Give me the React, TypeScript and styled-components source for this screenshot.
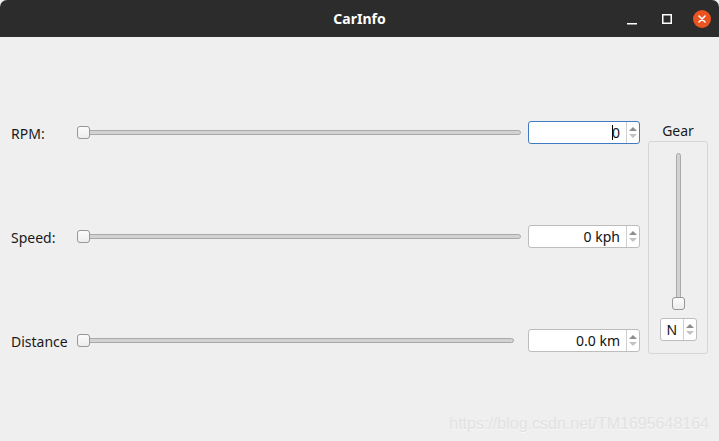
import React from "react";
import styled, { createGlobalStyle } from "styled-components";

const Global = createGlobalStyle`
  html, body { margin: 0; padding: 0; background: #2c2c2c; }
  body { font-family: "Noto Sans", "DejaVu Sans", sans-serif; }
`;

const Window = styled.div`
  width: 719px;
  height: 441px;
  display: flex;
  flex-direction: column;
  background: #efefef;
  position: relative;
  overflow: hidden;
`;

const TitleBar = styled.div`
  height: 37px;
  flex: none;
  background: #2c2c2c;
  border-radius: 7px 7px 0 0;
  display: flex;
  align-items: center;
  justify-content: center;
  position: relative;
  color: #ffffff;
  font-weight: 700;
  font-size: 14px;
`;

const Controls = styled.div`
  position: absolute;
  right: 8px;
  top: 0;
  height: 37px;
  display: flex;
  align-items: center;
  gap: 17px;
`;

const CtrlButton = styled.div<{ $close?: boolean }>`
  width: 18px;
  height: 18px;
  border-radius: 50%;
  display: flex;
  align-items: center;
  justify-content: center;
  background: ${(p) => (p.$close ? "#e95420" : "transparent")};
`;

const Body = styled.div`
  flex: 1;
  display: flex;
  padding: 84px 11px 0 11px;
  gap: 8px;
`;

const Rows = styled.div`
  display: flex;
  flex-direction: column;
  gap: 81px;
  width: 629px;
`;

const Row = styled.div`
  display: grid;
  grid-template-columns: 59px 1fr 112px;
  align-items: center;
  height: 23px;
  column-gap: 7px;
`;

const Label = styled.div`
  font-size: 14px;
  color: #1a1a1a;
  padding-top: 1px;
  white-space: nowrap;
`;

const HTrack = styled.div<{ $trim?: number }>`
  position: relative;
  height: 13px;
  margin-right: ${(p) => p.$trim ?? 0}px;
  display: flex;
  align-items: center;
`;

const HGroove = styled.div`
  flex: 1;
  height: 3px;
  background: #d2d2d2;
  border: 1px solid #a9a9a9;
  border-radius: 3px;
`;

const Handle = styled.div`
  position: absolute;
  width: 11px;
  height: 11px;
  background: linear-gradient(#fbfbfb, #ededed);
  border: 1px solid #979797;
  border-radius: 3px;
`;

const HHandle = styled(Handle)`
  left: 0;
  top: 0;
`;

const SpinBox = styled.div<{ $focus?: boolean; $w?: number }>`
  height: 21px;
  width: ${(p) => (p.$w ? `${p.$w}px` : "auto")};
  border: 1px solid ${(p) => (p.$focus ? "#3f7ac2" : "#bdbdbd")};
  border-radius: 3px;
  background: #ffffff;
  display: flex;
  box-sizing: content-box;
`;

const SpinText = styled.div<{ $left?: boolean }>`
  flex: 1;
  display: flex;
  align-items: center;
  justify-content: ${(p) => (p.$left ? "flex-start" : "flex-end")};
  padding: 0 6px;
  font-size: 14px;
  color: #111;
`;

const Caret = styled.span`
  display: inline-block;
  width: 1px;
  height: 15px;
  background: #000;
  margin-right: -1px;
`;

const Arrows = styled.div`
  width: 12px;
  border-left: 1px solid #d0d0d0;
  display: flex;
  flex-direction: column;
  align-items: center;
  justify-content: center;
  gap: 3px;
`;

const Up = styled.div`
  width: 0;
  height: 0;
  border-left: 4px solid transparent;
  border-right: 4px solid transparent;
  border-bottom: 4px solid #8d8d8d;
`;

const Down = styled.div`
  width: 0;
  height: 0;
  border-left: 4px solid transparent;
  border-right: 4px solid transparent;
  border-top: 4px solid #c2c2c2;
`;

const GearCol = styled.div`
  display: flex;
  flex-direction: column;
  align-items: center;
  margin-top: 1px;
  width: 60px;
`;

const GearLabel = styled.div`
  font-size: 14px;
  color: #1a1a1a;
  height: 17px;
  line-height: 17px;
  margin-bottom: 2px;
`;

const GroupBox = styled.div`
  width: 58px;
  height: 200px;
  border: 1px solid #d6d6d6;
  border-radius: 3px;
  display: flex;
  flex-direction: column;
  align-items: center;
  padding-top: 11px;
  box-sizing: content-box;
`;

const VTrack = styled.div`
  position: relative;
  width: 13px;
  height: 157px;
  display: flex;
  justify-content: center;
`;

const VGroove = styled.div`
  height: 100%;
  background: #d2d2d2;
  border: 1px solid #a9a9a9;
  border-radius: 3px;
  box-sizing: border-box;
  width: 5px;
`;

const VHandle = styled(Handle)`
  left: 0;
  bottom: 0;
`;

const GearSpin = styled.div`
  margin-top: 8px;
`;

const Watermark = styled.div`
  position: absolute;
  right: 10px;
  bottom: 8px;
  font-family: "Liberation Sans", Arial, sans-serif;
  font-size: 16px;
  color: #e2e2e2;
  text-shadow: 0 1px 0 #f8f8f8;
`;

const Spin = ({ value, focus, left, w }: { value: string; focus?: boolean; left?: boolean; w?: number }) => (
  <SpinBox $focus={focus} $w={w}>
    <SpinText $left={left}>
      {focus && <Caret />}
      {value}
    </SpinText>
    <Arrows>
      <Up />
      <Down />
    </Arrows>
  </SpinBox>
);

const rows = [
  { label: "RPM:", value: "0", focus: true, trim: 0 },
  { label: "Speed:", value: "0 kph", trim: 0 },
  { label: "Distance", value: "0.0 km", trim: 7 },
];

export default function App() {
  return (
    <Window>
      <Global />
      <TitleBar>
        CarInfo
        <Controls>
          <CtrlButton>
            <svg width="12" height="12" viewBox="0 0 12 12">
              <rect x="1" y="10" width="10" height="1.5" fill="#fff" />
            </svg>
          </CtrlButton>
          <CtrlButton>
            <svg width="12" height="12" viewBox="0 0 12 12">
              <rect x="1.75" y="1.75" width="8.5" height="8.5" fill="none" stroke="#fff" strokeWidth="1.5" />
            </svg>
          </CtrlButton>
          <CtrlButton $close>
            <svg width="10" height="10" viewBox="0 0 10 10">
              <path d="M2 2 L8 8 M8 2 L2 8" stroke="#fff" strokeWidth="1.6" strokeLinecap="round" />
            </svg>
          </CtrlButton>
        </Controls>
      </TitleBar>
      <Body>
        <Rows>
          {rows.map((r) => (
            <Row key={r.label}>
              <Label>{r.label}</Label>
              <HTrack $trim={r.trim}>
                <HGroove />
                <HHandle />
              </HTrack>
              <Spin value={r.value} focus={r.focus} />
            </Row>
          ))}
        </Rows>
        <GearCol>
          <GearLabel>Gear</GearLabel>
          <GroupBox>
            <VTrack>
              <VGroove />
              <VHandle />
            </VTrack>
            <GearSpin>
              <Spin value="N" left w={35} />
            </GearSpin>
          </GroupBox>
        </GearCol>
      </Body>
      <Watermark>https://blog.csdn.net/TM1695648164</Watermark>
    </Window>
  );
}
